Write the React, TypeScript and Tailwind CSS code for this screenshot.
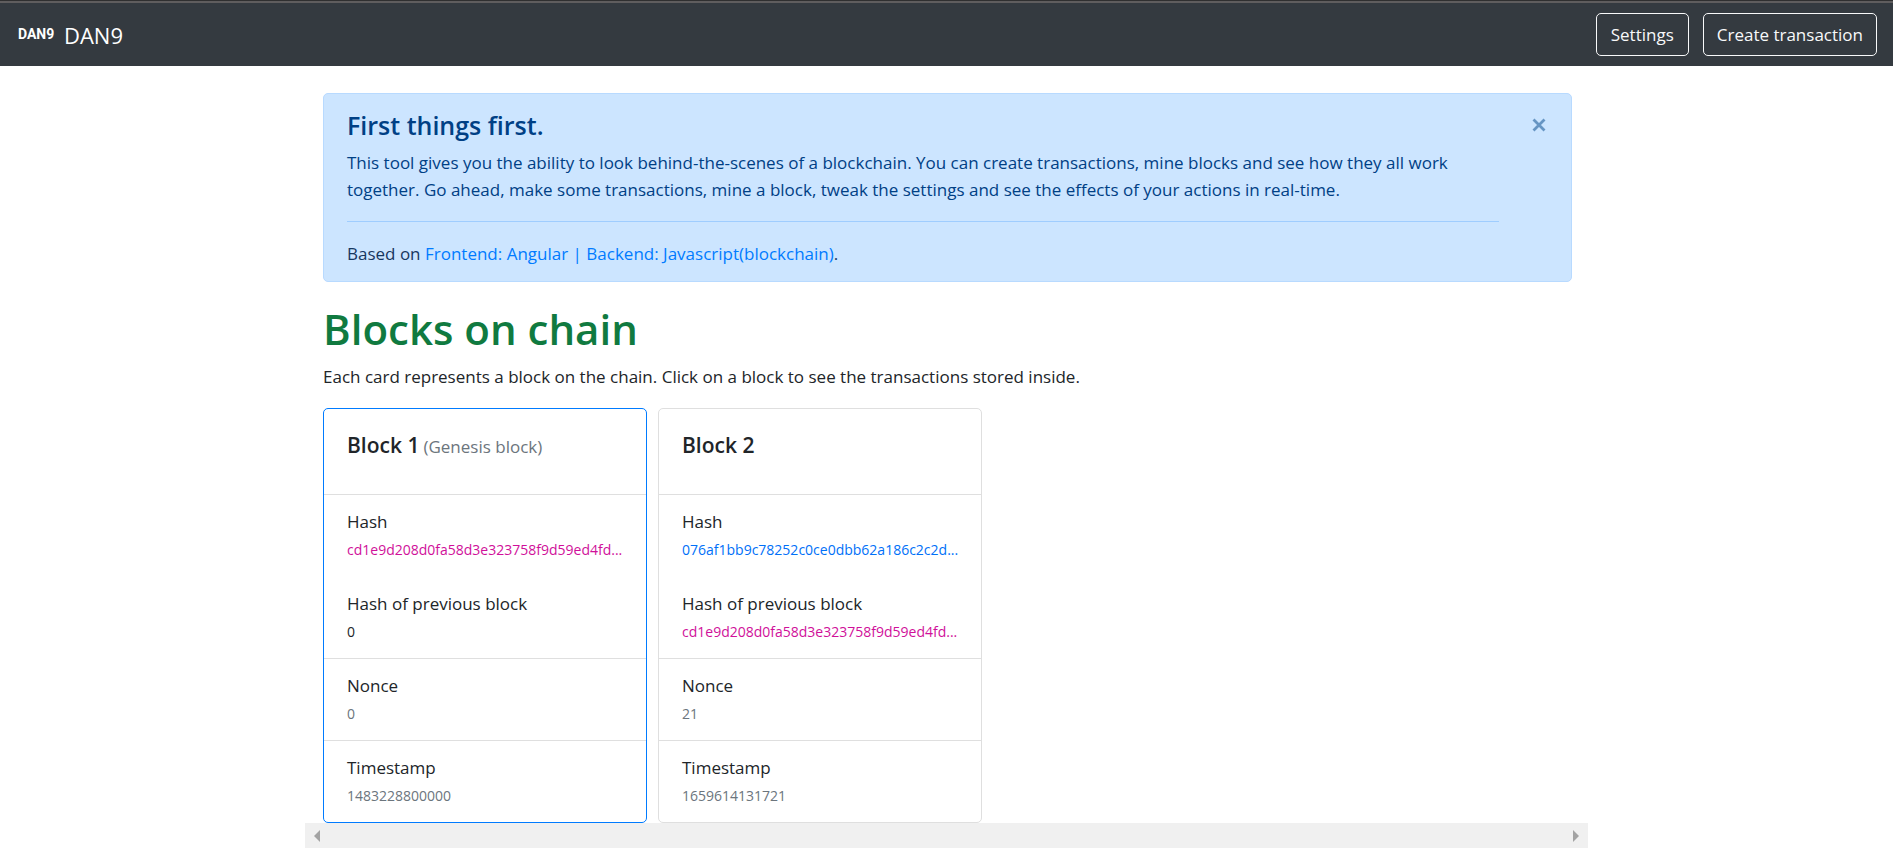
import { useState } from "react";

type Tone = "pink" | "blue" | "dark" | "muted";

interface Field {
  label: string;
  value: string;
  tone: Tone;
}

interface Block {
  title: string;
  note?: string;
  groups: Field[][];
}

const tones: Record<Tone, string> = {
  pink: "text-[#d0109a]",
  blue: "text-[#0070f8]",
  dark: "text-[#212529]",
  muted: "text-[#6c757d]",
};

const blocks: Block[] = [
  {
    title: "Block 1",
    note: "(Genesis block)",
    groups: [
      [
        { label: "Hash", value: "cd1e9d208d0fa58d3e323758f9d59ed4fd...", tone: "pink" },
        { label: "Hash of previous block", value: "0", tone: "dark" },
      ],
      [{ label: "Nonce", value: "0", tone: "muted" }],
      [{ label: "Timestamp", value: "1483228800000", tone: "muted" }],
    ],
  },
  {
    title: "Block 2",
    groups: [
      [
        { label: "Hash", value: "076af1bb9c78252c0ce0dbb62a186c2c2d...", tone: "blue" },
        { label: "Hash of previous block", value: "cd1e9d208d0fa58d3e323758f9d59ed4fd...", tone: "pink" },
      ],
      [{ label: "Nonce", value: "21", tone: "muted" }],
      [{ label: "Timestamp", value: "1659614131721", tone: "muted" }],
    ],
  },
];

function Navbar() {
  return (
    <nav className="flex items-center justify-between border-t-2 border-[#5f5d5e] bg-[#343a40] py-[10px] pr-4 pl-[18px] text-white">
      <a href="#" className="flex items-center gap-3">
        <span className="w-[34px] font-[Roboto,sans-serif] text-[14px] font-bold">DAN9</span>
        <span className="text-[22px] leading-8">DAN9</span>
      </a>
      <div className="flex gap-[14px]">
        <button type="button" className="rounded-[5px] border border-[#f8f9fa] px-[14px] py-[7px] leading-[27px] text-[#f8f9fa]">
          Settings
        </button>
        <button type="button" className="rounded-[5px] border border-[#f8f9fa] px-[13px] py-[7px] leading-[27px] text-[#f8f9fa]">
          Create transaction
        </button>
      </div>
    </nav>
  );
}

function Intro({ onClose }: { onClose: () => void }) {
  return (
    <section className="flex items-start justify-between rounded-[5px] border border-[#b8daff] bg-[#cce5ff] pt-[15px] pr-6 pb-[14px] pl-[23px] text-[#004085]">
      <div className="mr-8 min-w-0 flex-1">
        <h4 className="mb-2 text-[25px] leading-8 font-semibold">First things first.</h4>
        <p className="leading-[27px]">
          This tool gives you the ability to look behind-the-scenes of a blockchain. You can create transactions, mine
          blocks and see how they all work together. Go ahead, make some transactions, mine a block, tweak the settings
          and see the effects of your actions in real-time.
        </p>
        <hr className="my-[18px] border-t border-[#9fcdff]" />
        <p className="leading-[27px] text-[#17375f]">
          Based on{" "}
          <a href="#" className="text-[#007bff]">
            Frontend: Angular | Backend: Javascript(blockchain)
          </a>
          .
        </p>
      </div>
      <button type="button" aria-label="Close" onClick={onClose} className="mt-[9px] text-[#6695c3]">
        <svg width="16" height="14" viewBox="0 0 16 14" fill="none" stroke="currentColor" strokeWidth="2.8">
          <path d="M2.5 1.5 13.5 12.5M13.5 1.5 2.5 12.5" />
        </svg>
      </button>
    </section>
  );
}

function BlockCard({ block, selected, onSelect }: { block: Block; selected: boolean; onSelect: () => void }) {
  return (
    <button
      type="button"
      onClick={onSelect}
      className={
        "w-[324px] shrink-0 rounded-[5px] border bg-white text-left " +
        (selected ? "border-[#007bff]" : "border-[#dfdfdf]")
      }
    >
      <h5 className="px-[23px] pt-[23px] pb-9 text-[21px] leading-[26px] font-semibold">
        {block.title}
        {block.note && <small className="ml-1 text-[17px] leading-none font-normal text-[#6c757d]">{block.note}</small>}
      </h5>
      {block.groups.map((group) => (
        <div key={group[0].label} className="flex flex-col gap-[25px] border-t border-[#dfdfdf] px-[23px] pt-[13px] pb-[11px]">
          {group.map((field) => (
            <div key={field.label}>
              <div className="leading-[27px]">{field.label}</div>
              <div className={"text-[14px] leading-[30px] whitespace-nowrap " + tones[field.tone]}>{field.value}</div>
            </div>
          ))}
        </div>
      ))}
    </button>
  );
}

export default function App() {
  const [selected, setSelected] = useState(0);
  const [open, setOpen] = useState(true);

  return (
    <div className="bg-white font-['Open_Sans','Noto_Sans',sans-serif] text-[17px] text-[#212529]">
      <div className="h-px bg-[#2f2f30]" />
      <Navbar />
      <main className="mx-auto mt-[27px] max-w-[1283px]">
        <div className="pr-4 pl-[18px]">
          {open && <Intro onClose={() => setOpen(false)} />}
          <h1 className="mt-5 mb-[7px] text-[42px] leading-[54px] font-semibold text-[#107a40]">Blocks on chain</h1>
          <p className="mb-[18px] leading-[27px]">
            Each card represents a block on the chain. Click on a block to see the transactions stored inside.
          </p>
          <div className="flex gap-[11px]">
            {blocks.map((block, i) => (
              <BlockCard key={block.title} block={block} selected={i === selected} onSelect={() => setSelected(i)} />
            ))}
          </div>
        </div>
        <div className="flex h-[25px] items-center justify-between bg-[#f0f0f0] px-[9px] text-[#a3a3a3]">
          <button type="button" aria-label="Scroll left">
            <svg width="6" height="12" viewBox="0 0 6 12" fill="currentColor">
              <path d="M6 0v12L0 6z" />
            </svg>
          </button>
          <button type="button" aria-label="Scroll right">
            <svg width="6" height="12" viewBox="0 0 6 12" fill="currentColor">
              <path d="M0 0v12l6-6z" />
            </svg>
          </button>
        </div>
      </main>
    </div>
  );
}
